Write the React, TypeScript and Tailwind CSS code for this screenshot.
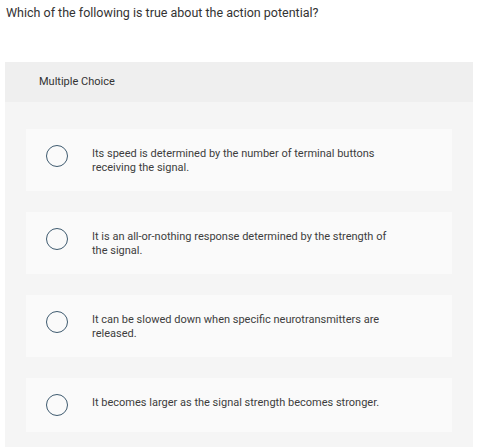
const options = [
  ["Its speed is determined by the number of terminal buttons", "receiving the signal."],
  ["It is an all-or-nothing response determined by the strength of", "the signal."],
  ["It can be slowed down when specific neurotransmitters are", "released."],
  ["It becomes larger as the signal strength becomes stronger."],
];

function OptionCard({lines}: {lines: string[]}) {
  return (
    <li className="flex items-start bg-[#fafafa] py-4 pl-5">
      <span className="h-[22px] w-[22px] shrink-0 rounded-full border-[1.3px] border-[#3e5a6f]" />
      <span className="ml-[24px] pt-[2px] text-[11px] leading-[14px] text-[#3d3d3d]">
        {lines.map((l, i) => (
          <span key={i} className="block">{l}</span>
        ))}
      </span>
    </li>
  );
}

export default function App() {
  return (
    <div className="h-[447px] w-[495px] overflow-hidden bg-white font-['Roboto',sans-serif]">
      <p className="px-[6px] pt-[5px] text-[12.5px] leading-[16px] text-[#333]">
        Which of the following is true about the action potential?
      </p>
      <section className="ml-[5px] mt-[41px] w-[468px] bg-[#f5f5f5] pb-6">
        <div className="flex h-[40px] items-center bg-[#efefef] pl-[34px] text-[11px] text-[#333]">
          Multiple Choice
        </div>
        <ul className="flex flex-col gap-[21px] px-[21px] pt-[27px]">
          {options.map((o, i) => (
            <OptionCard key={i} lines={o} />
          ))}
        </ul>
      </section>
    </div>
  );
}
